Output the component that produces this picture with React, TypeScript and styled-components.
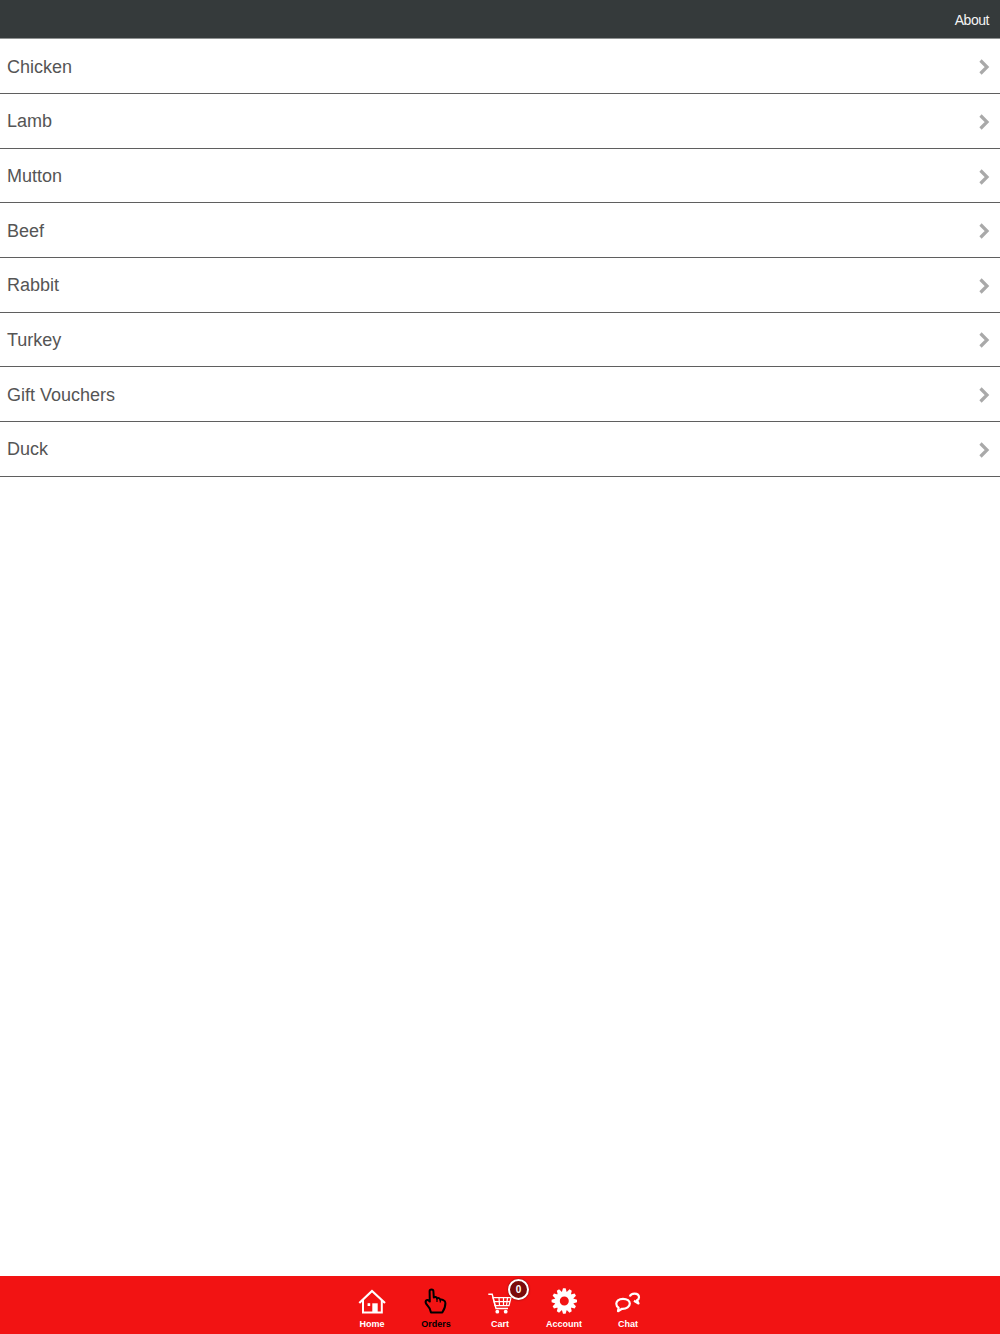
import styled, { createGlobalStyle } from "styled-components";
import type { ReactNode } from "react";

const GlobalStyle = createGlobalStyle`
  html, body {
    margin: 0;
    padding: 0;
    height: 100%;
    background: #fff;
    font-family: "Liberation Sans", Arial, sans-serif;
  }
  #root {
    height: 100%;
  }
`;

const Page = styled.div`
  display: flex;
  flex-direction: column;
  height: 1334px;
`;

const Header = styled.header`
  display: flex;
  flex: none;
  align-items: center;
  justify-content: flex-end;
  box-sizing: border-box;
  height: 39px;
  padding: 2px 11px 0 0;
  background: #353a3b;
  border-bottom: 1px solid #8f9292;
`;

const HeaderLink = styled.a`
  color: #f4f4f4;
  font-size: 14px;
  letter-spacing: -0.45px;
`;

const List = styled.ul`
  flex: 1;
  margin: 0;
  padding: 0.5px 0 0;
  list-style: none;
`;

const Row = styled.li`
  display: flex;
  align-items: center;
  justify-content: space-between;
  box-sizing: border-box;
  height: 54.625px;
  padding: 2px 10px 0 7px;
  color: #555;
  font-size: 18px;
  border-bottom: 1px solid #5f5f5f;
`;

const Footer = styled.footer`
  display: flex;
  flex: none;
  justify-content: center;
  height: 58px;
  background: #f21313;
`;

const Tab = styled.a<{ $active?: boolean }>`
  position: relative;
  display: flex;
  flex-direction: column;
  align-items: center;
  width: 64px;
  padding-top: 11px;
  color: ${(p) => (p.$active ? "#000" : "#fff")};
  font-size: 9px;
  font-weight: bold;
`;

const TabIcon = styled.svg`
  display: block;
  width: 30px;
  height: 30px;
  margin-bottom: 2px;
`;

const Badge = styled.span`
  position: absolute;
  top: 3px;
  left: 40px;
  display: flex;
  align-items: center;
  justify-content: center;
  box-sizing: border-box;
  width: 21px;
  height: 21px;
  color: #fff;
  font-size: 10px;
  background: #7b0b0b;
  border: 2px solid #fff;
  border-radius: 50%;
  box-shadow: 0 0 2px rgba(0, 0, 0, 0.6);
`;

const categories = ["Chicken", "Lamb", "Mutton", "Beef", "Rabbit", "Turkey", "Gift Vouchers", "Duck"];

function Chevron() {
  return (
    <svg width="12" height="18" viewBox="0 0 12 18">
      <path d="M2.5 2.5 L9 9 L2.5 15.5" fill="none" stroke="#a9a9a9" strokeWidth="3.2" />
    </svg>
  );
}

const homeIcon = (
  <>
    <path d="M2.3 16 L15 4 L28 16" fill="none" stroke="currentColor" strokeWidth="2.2" />
    <path d="M6 13 V25.4 H24.8 V13" fill="none" stroke="currentColor" strokeWidth="2" />
    <rect x="15.3" y="16.3" width="5.4" height="9" fill="currentColor" />
    <rect x="10.6" y="16.2" width="2.6" height="2.8" fill="currentColor" />
  </>
);

const ordersIcon = (
  <>
    <path
      d="M8.6 4.2 C8.6 2 12.4 2 12.4 4.2 L12.8 10.5 C13.6 9.6 15.8 9.8 16 11.6 C17 10.6 19 11 19.3 12.8 C20.6 12.2 24.3 13 24.4 16 C24.5 19 23.6 22 21.3 25.5 H10 C9.3 22 8.6 20.5 6.5 18.5 C5 17 4 15.2 5 13.6 C6 12.3 7.5 13 8.8 14.5 Z"
      fill="none"
      stroke="currentColor"
      strokeWidth="2"
      strokeLinejoin="round"
    />
    <path d="M16 11.6 V15 M19.3 12.8 V15.5" fill="none" stroke="currentColor" strokeWidth="1.2" />
  </>
);

const cartIcon = (
  <>
    <path d="M3.3 7.3 H7.2 L11 21.5 H23" fill="none" stroke="currentColor" strokeWidth="1.4" />
    <path
      d="M8 10.7 H26 L24 18.7 H10 Z M14 10.7 L14.5 18.7 M18.5 10.7 V18.7 M22.5 10.7 L21.5 18.7 M9 14.6 H25"
      fill="none"
      stroke="currentColor"
      strokeWidth="1.2"
    />
    <circle cx="12.3" cy="24.7" r="1.9" fill="currentColor" />
    <circle cx="20.7" cy="24.7" r="1.9" fill="currentColor" />
  </>
);

const gearTeeth = Array.from({ length: 12 }, (_, i) => i * 30);

const accountIcon = (
  <>
    <path
      d="M15.3 4.5 A9.5 9.5 0 1 0 15.3 23.5 A9.5 9.5 0 1 0 15.3 4.5 Z M15.3 9.5 A4.5 4.5 0 1 1 15.3 18.5 A4.5 4.5 0 1 1 15.3 9.5 Z"
      fill="currentColor"
      fillRule="evenodd"
    />
    {gearTeeth.map((deg) => (
      <polygon
        key={deg}
        points="14,1.3 16.6,1.3 18,6 12.6,6"
        fill="currentColor"
        transform={`rotate(${deg} 15.3 14)`}
      />
    ))}
  </>
);

const chatIcon = (
  <>
    <path
      d="M10 11.8 C5.6 11.8 3.3 14.2 3.3 16.8 C3.3 18.5 4.2 19.8 5.6 20.6 L5 24.2 L9 21.8 C13.6 22 16.8 19.6 16.8 16.6 C16.8 14 14.2 11.8 10 11.8 Z"
      fill="none"
      stroke="currentColor"
      strokeWidth="2.2"
      strokeLinejoin="round"
    />
    <path
      d="M16.8 9.5 C17.5 7.5 19.5 6.7 21.5 6.7 C24.5 6.7 26 8.5 26 10.3 C26 11.8 25 12.8 24 13.3 L25.5 16.5 L21 13.8"
      fill="none"
      stroke="currentColor"
      strokeWidth="2.2"
      strokeLinejoin="round"
    />
  </>
);

const tabs: { label: string; icon: ReactNode; active?: boolean; badge?: string }[] = [
  { label: "Home", icon: homeIcon },
  { label: "Orders", icon: ordersIcon, active: true },
  { label: "Cart", icon: cartIcon, badge: "0" },
  { label: "Account", icon: accountIcon },
  { label: "Chat", icon: chatIcon },
];

export default function App() {
  return (
    <Page>
      <GlobalStyle />
      <Header>
        <HeaderLink>About</HeaderLink>
      </Header>
      <List>
        {categories.map((name) => (
          <Row key={name}>
            {name}
            <Chevron />
          </Row>
        ))}
      </List>
      <Footer>
        {tabs.map((tab) => (
          <Tab key={tab.label} $active={tab.active}>
            <TabIcon viewBox="0 0 30 30">{tab.icon}</TabIcon>
            {tab.label}
            {tab.badge && <Badge>{tab.badge}</Badge>}
          </Tab>
        ))}
      </Footer>
    </Page>
  );
}
